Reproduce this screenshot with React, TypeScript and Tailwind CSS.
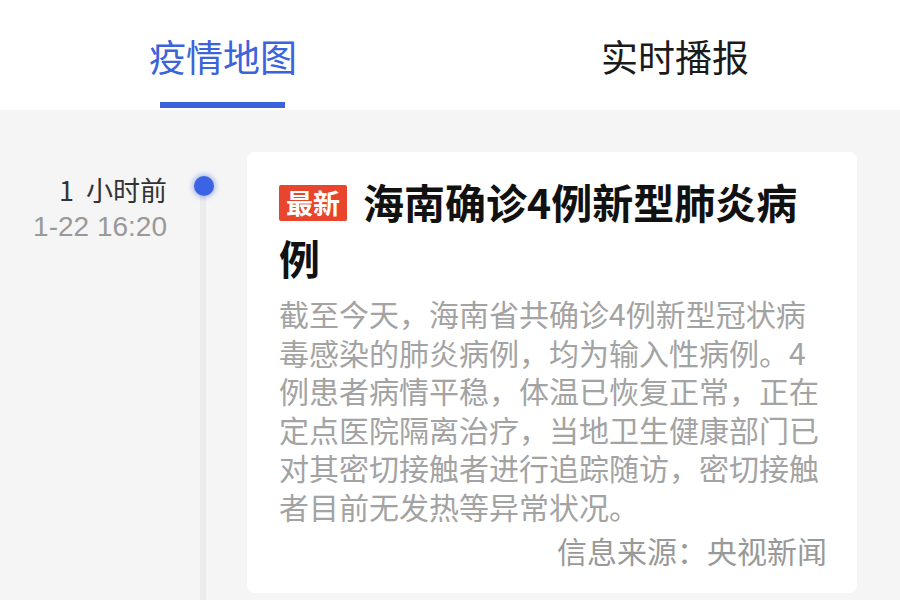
const font = { fontFamily: '"Noto Sans CJK SC", "Noto Sans", sans-serif' };

const tabs = [
  { label: '疫情地图', active: true },
  { label: '实时播报', active: false },
];

const body =
  '截至今天，海南省共确诊4例新型冠状病毒感染的肺炎病例，均为输入性病例。4例患者病情平稳，体温已恢复正常，正在定点医院隔离治疗，当地卫生健康部门已对其密切接触者进行追踪随访，密切接触者目前无发热等异常状况。';

export default function App() {
  return (
    <div className="w-[900px] h-[600px] overflow-hidden bg-[#f5f5f5] font-['Noto_Sans_CJK_SC',sans-serif]">
      {/* Tabs */}
      <div className="flex h-[110px] bg-white">
        {tabs.map((tab) => (
          <div key={tab.label} className="flex flex-1 flex-col items-center">
            <div
              className={`mt-[32px] text-[37px] leading-[48px] ${
                tab.active ? 'mr-[4px] text-[#3b63db]' : 'text-[#1a1a1a]'
              }`}
            >
              {tab.label}
            </div>
            {tab.active && <div className="mt-[22px] mr-[5px] h-[6px] w-[125px] bg-[#3b63db]" />}
          </div>
        ))}
      </div>

      {/* Timeline */}
      <div className="flex pt-[42px]">
        <div className="flex w-[167px] shrink-0 flex-col items-end gap-[6px] pt-[22px]">
          <div className="text-[27px] leading-[32px] text-[#333]">
            1<span className="ml-[12px]">小时前</span>
          </div>
          <div className="font-['Liberation_Sans',sans-serif] text-[28px] leading-[30px] text-[#999]">
            1-22 16:20
          </div>
        </div>

        <div className="relative w-[80px] shrink-0">
          <div className="absolute left-[33px] top-[44px] h-[500px] w-[6px] bg-[#ebebeb]" />
          <div className="absolute left-[27px] top-[24px] h-[20px] w-[20px] rounded-full bg-[#3b63e3] shadow-[0_0_4px_2px_rgba(59,99,227,0.35)]" />
        </div>

        <div className="w-[610px] rounded-lg bg-white pl-[32px] pr-[36px] pt-[21px] pb-[23px]" style={font}>
          <div className="text-[41px] font-bold leading-[56px] text-[#111]">
            <div className="flex items-center">
              <span className="mr-[16px] mt-[3px] rounded-[2px] bg-[#e8452c] px-[7px] text-[27px] leading-[36px] font-bold text-white">
                最新
              </span>
              <span>海南确诊4例新型肺炎病</span>
            </div>
            <div>例</div>
          </div>
          <p className="mt-[9px] text-[30px] leading-[38.5px] text-[#a3a3a3]">{body}</p>
          <div className="mt-[6px] mr-[-6px] text-right text-[30px] leading-[38.5px] text-[#999]">
            信息来源：央视新闻
          </div>
        </div>
      </div>
    </div>
  );
}
